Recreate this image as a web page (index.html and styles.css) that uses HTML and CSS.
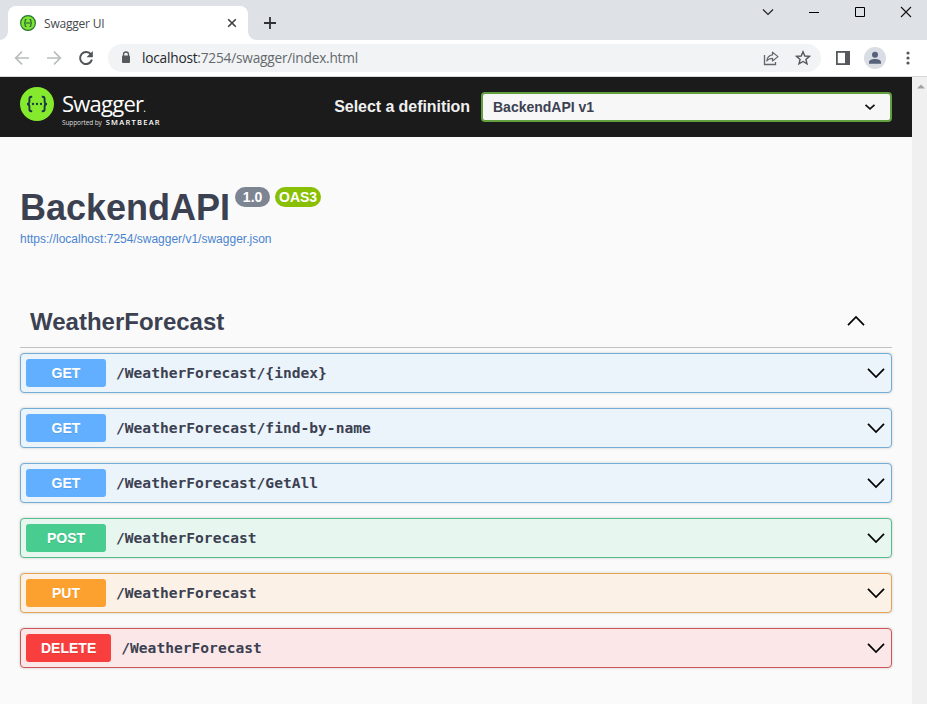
FILE: index.html
```html
<!DOCTYPE html>
<html lang="en">
<head>
<meta charset="utf-8">
<title>Swagger UI</title>
<link rel="stylesheet" href="styles.css">
</head>
<body>
<header class="tabs">
  <div class="tab">
    <svg class="favicon" width="16" height="16" viewBox="0 0 16 16"><circle cx="8" cy="8" r="7.4" fill="#7fe234" stroke="#26762f" stroke-width="1.2"/><path d="M6.500 4.500H6q-.9 0-.9.9v1.500q0 1.100-1 1.100 1 0 1 1.100v1.500q0 .9.9.9h.5M9.500 4.500h.5q.9 0 .9.9v1.500q0 1.100 1 1.100-1 0-1 1.100v1.500q0 .9-.9.9h-.5M6 8h4" fill="none" stroke="#1d5a3a" stroke-width="1.1"/></svg>
    <span class="tab-title">Swagger UI</span>
    <svg class="tab-close" width="10" height="10" viewBox="0 0 10 10"><path d="M1.200 1.200l7.600 7.600M8.800 1.200L1.200 8.800" stroke="#3c4043" stroke-width="1.6"/></svg>
  </div>
  <svg class="new-tab" width="12" height="12" viewBox="0 0 12 12"><path d="M6 0v12M0 6h12" stroke="#303236" stroke-width="1.8"/></svg>
  <div class="window-buttons">
    <svg width="46" height="24" viewBox="0 0 46 24"><path d="M18 9.500l5 5 5-5" fill="none" stroke="#222" stroke-width="1.2"/></svg>
    <svg width="46" height="24" viewBox="0 0 46 24"><path d="M18 12.500h10" stroke="#000"/></svg>
    <svg width="46" height="24" viewBox="0 0 46 24"><path d="M18.500 7.500h9v9h-9z" fill="none" stroke="#000"/></svg>
    <svg width="46" height="24" viewBox="0 0 46 24"><path d="M18 7l10 10M28 7L18 17" stroke="#111" stroke-width="1.1"/></svg>
  </div>
</header>
<nav class="toolbar">
  <svg class="nav-icon" width="16" height="16" viewBox="0 0 16 16"><path d="M15 8H2M8 1.700L1.700 8 8 14.300" fill="none" stroke="#babcbe" stroke-width="1.7"/></svg>
  <svg class="nav-icon" width="16" height="16" viewBox="0 0 16 16"><path d="M1 8h13M8 1.700L14.300 8 8 14.300" fill="none" stroke="#babcbe" stroke-width="1.7"/></svg>
  <svg class="nav-icon" width="16" height="16" viewBox="0 0 16 16"><path d="M13 4.600A6 6 0 1 0 13.900 9.500" fill="none" stroke="#505357" stroke-width="2"/><path d="M14.800 1v6.300H8.500z" fill="#505357"/></svg>
  <div class="address">
    <svg class="lock" width="10" height="13" viewBox="0 0 10 13"><path d="M2.500 5V3.500a2.500 2.500 0 0 1 5 0V5" fill="none" stroke="#55585c" stroke-width="1.3"/><rect x="1" y="4.500" width="8" height="7.500" rx="1" fill="#55585c"/></svg>
    <span class="url"><b>localhost</b>:7254/swagger/index.html</span>
    <svg class="share" width="16" height="16" viewBox="0 0 16 16"><path d="M1.500 5v9.500h11V12" fill="none" stroke="#63666b" stroke-width="1.3"/><path d="M9.500 2.200v2.600C5.800 5.200 4.100 7.800 3.800 11c1.400-1.900 3.100-2.700 5.700-2.700V11L15 6.600z" fill="none" stroke="#63666b" stroke-width="1.2" stroke-linejoin="round"/></svg>
    <svg class="star" width="16" height="16" viewBox="0 0 16 16"><path d="M8 1.800l1.800 4.200 4.600.4-3.500 3 1.100 4.500L8 11.500l-4 2.400 1.100-4.500-3.500-3 4.600-.4z" fill="none" stroke="#55585c" stroke-width="1.4"/></svg>
  </div>
  <svg class="panel" width="14" height="14" viewBox="0 0 14 14"><rect x=".9" y=".9" width="12.200" height="12.200" fill="none" stroke="#55585c" stroke-width="1.8"/><path d="M9 1h4.500v12H9z" fill="#55585c"/></svg>
  <svg class="avatar" width="22" height="22" viewBox="0 0 22 22"><circle cx="11" cy="11" r="11" fill="#dadde4"/><circle cx="11" cy="7.800" r="3" fill="#56617a"/><path d="M5 16.800v-1.500c0-2 3-3.200 6-3.200s6 1.200 6 3.200v1.500z" fill="#56617a"/></svg>
  <svg class="menu" width="4" height="14" viewBox="0 0 4 14"><g fill="#55585c"><circle cx="2" cy="2" r="1.600"/><circle cx="2" cy="7" r="1.600"/><circle cx="2" cy="12" r="1.600"/></g></svg>
</nav>
<div class="viewport">
  <main class="page">
    <div class="topbar">
      <svg class="logo" width="34" height="34" viewBox="0 0 34 34"><circle cx="17" cy="17" r="17" fill="#85ea2d"/><g fill="none" stroke="#173647" stroke-width="1.9"><path d="M12.200 9.800h-.8q-2 0-2 2v2.700q0 2.500-2.400 2.500 2.400 0 2.400 2.500v2.700q0 2 2 2h.8M21.800 9.800h.8q2 0 2 2v2.700q0 2.500 2.400 2.500-2.400 0-2.400 2.500v2.700q0 2-2 2h-.8"/></g><g fill="#173647"><circle cx="13" cy="17" r="1.150"/><circle cx="17" cy="17" r="1.150"/><circle cx="21" cy="17" r="1.150"/></g></svg>
      <div class="brand">
        <div class="brand-name">Swagger<span class="mark">.</span></div>
        <div class="brand-sub"><span>Supported by</span><b>SMARTBEAR</b></div>
      </div>
      <span class="select-label">Select a definition</span>
      <div class="select"><span>BackendAPI v1</span><svg width="12" height="8" viewBox="0 0 12 8"><path d="M1.500 1.800L6 5.800l4.500-4" fill="none" stroke="#111" stroke-width="1.700"/></svg></div>
    </div>
    <section class="info">
      <div class="title-row"><h1>BackendAPI</h1><span class="badge version">1.0</span><span class="badge oas">OAS3</span></div>
      <a class="spec-link">https://localhost:7254/swagger/v1/swagger.json</a>
    </section>
    <section class="operations">
      <div class="tag"><h2>WeatherForecast</h2><svg width="20" height="12" viewBox="0 0 20 12"><path d="M2 10.200L10 2l8 8.200" fill="none" stroke="#000" stroke-width="1.7"/></svg></div>
      <div class="op get"><span class="method">GET</span><span class="path">/WeatherForecast/{index}</span><svg width="20" height="12" viewBox="0 0 20 12"><path d="M2 1.800L10 10l8-8.200" /></svg></div>
      <div class="op get"><span class="method">GET</span><span class="path">/WeatherForecast/find-by-name</span><svg width="20" height="12" viewBox="0 0 20 12"><path d="M2 1.800L10 10l8-8.200" /></svg></div>
      <div class="op get"><span class="method">GET</span><span class="path">/WeatherForecast/GetAll</span><svg width="20" height="12" viewBox="0 0 20 12"><path d="M2 1.800L10 10l8-8.200" /></svg></div>
      <div class="op post"><span class="method">POST</span><span class="path">/WeatherForecast</span><svg width="20" height="12" viewBox="0 0 20 12"><path d="M2 1.800L10 10l8-8.200" /></svg></div>
      <div class="op put"><span class="method">PUT</span><span class="path">/WeatherForecast</span><svg width="20" height="12" viewBox="0 0 20 12"><path d="M2 1.800L10 10l8-8.200" /></svg></div>
      <div class="op delete"><span class="method">DELETE</span><span class="path">/WeatherForecast</span><svg width="20" height="12" viewBox="0 0 20 12"><path d="M2 1.800L10 10l8-8.200" /></svg></div>
    </section>
  </main>
  <aside class="scrollbar"><svg width="8" height="5" viewBox="0 0 8 5"><path d="M0 4.500L4 .5l4 4z" fill="#a3a3a3"/></svg></aside>
</div>
</body>
</html>
```
FILE: styles.css
```css
* { box-sizing: border-box; }
body {
  margin: 0;
  width: 927px;
  height: 704px;
  overflow: hidden;
  display: flex;
  flex-direction: column;
  font-family: "Liberation Sans", Arial, sans-serif;
  color: #3b4151;
}
svg { display: block; flex: none; }
h1, h2 { margin: 0; font-weight: bold; white-space: nowrap; }

.tabs {
  height: 40px;
  flex: none;
  display: flex;
  background: #dee1e6;
  padding-left: 8px;
}
.tab {
  position: relative;
  width: 240px;
  height: 34px;
  margin-top: 6px;
  padding: 0 11px 0 12px;
  display: flex;
  align-items: center;
  background: #fff;
  border-radius: 8px 8px 0 0;
}
.tab::before, .tab::after {
  content: "";
  position: absolute;
  bottom: 0;
  width: 8px;
  height: 8px;
}
.tab::before { left: -8px; background: radial-gradient(circle at 0 0, transparent 7.500px, #fff 8px); }
.tab::after { right: -8px; background: radial-gradient(circle at 100% 0, transparent 7.500px, #fff 8px); }
.tab-title {
  flex: 1;
  margin-left: 8px;
  font: 12px "Open Sans", "Noto Sans", sans-serif;
  letter-spacing: -0.200px;
  color: #45494d;
}
.new-tab { margin: 17px 0 0 16px; }
.window-buttons { display: flex; margin-left: auto; margin-right: -2px; }

.toolbar {
  height: 37px;
  flex: none;
  display: flex;
  align-items: center;
  padding: 0 17px 1px 14px;
  background: #fff;
  border-bottom: 1px solid #d5dad9;
}
.nav-icon { margin-right: 16px; }
.nav-icon:nth-of-type(3) { margin-right: 14px; }
.address {
  width: 713px;
  height: 28px;
  display: flex;
  align-items: center;
  padding: 0 10px 0 13px;
  background: #f1f3f4;
  border-radius: 14px;
}
.url {
  flex: 1;
  margin-left: 11px;
  font: 13.700px "Open Sans", "Noto Sans", sans-serif;
  letter-spacing: -0.220px;
  color: #65696e;
}
.url b { font-weight: normal; color: #25272b; }
.share { margin-right: 16px; }
.panel { margin-left: 15px; }
.avatar { margin-left: 14px; }
.menu { margin-left: auto; }

.viewport { flex: 1; display: flex; min-height: 0; }
.page { width: 912px; background: #fafafa; }
.scrollbar { flex: 1; background: #f0f0f0; padding: 7px 0 0 5px; }

.topbar {
  height: 60px;
  display: flex;
  align-items: center;
  padding: 0 20px;
  background: #1b1b1b;
}
.logo { margin-top: -6px; }
.brand { width: 106px; margin-left: 8px; color: #fff; align-self: flex-start; }
.brand-name {
  height: 27px;
  margin-top: 13px;
  font: 22px/27px "Open Sans", sans-serif;
  letter-spacing: -0.750px;
  white-space: nowrap;
}
.mark { font-size: 10px; }
.brand-sub {
  display: flex;
  gap: 4px;
  margin-top: 1px;
  font: 6.500px/9px "Open Sans", sans-serif;
  white-space: nowrap;
  color: #ddd;
}
.brand-sub b { font-size: 7.500px; font-weight: 600; letter-spacing: 1.250px; color: #fff; }
.brand-sub span { letter-spacing: -0.100px; }
.select-label {
  margin-left: auto;
  margin-right: 11px;
  font-size: 16px;
  font-weight: bold;
  letter-spacing: -0.060px;
  color: #f0f0f0;
  white-space: nowrap;
}
.select {
  width: 411px;
  height: 30px;
  display: flex;
  align-items: center;
  justify-content: space-between;
  padding: 0 14px 0 10px;
  border: 2px solid #62a03f;
  border-radius: 4px;
  background: #f7f7f7;
  font-size: 14px;
  font-weight: bold;
}

.info { padding: 48px 20px 0; height: 160px; }
.title-row { display: flex; align-items: flex-start; }
.title-row h1 { font-size: 36px; line-height: 46px; }
.badge {
  height: 20px;
  margin-top: 2px;
  border-radius: 10px;
  color: #fff;
  font-size: 14px;
  font-weight: bold;
  line-height: 20px;
  text-align: center;
}
.version { width: 35px; margin-left: 5px; background: #7d8492; }
.oas { width: 46px; margin-left: 5px; background: #89bf04; }
.spec-link { display: block; font-size: 12px; line-height: 14px; margin-top: 1px; color: #4a84d0; }

.operations { padding: 0 20px; }
.tag {
  height: 51px;
  display: flex;
  align-items: center;
  justify-content: space-between;
  padding: 0 26px 2px 10px;
  margin-bottom: 5px;
  border-bottom: 1px solid #bfc1c5;
}
.tag h2 { font-size: 24px; padding-top: 2px; }
.op {
  height: 40px;
  display: flex;
  align-items: center;
  margin-bottom: 15px;
  padding: 0 5px;
  border: 1px solid var(--line);
  border-radius: 4px;
  background: var(--tint);
  box-shadow: 0 0 3px rgba(0, 0, 0, 0.190);
}
.op svg { margin-left: auto; fill: none; stroke: #000; stroke-width: 1.7; }
.method {
  min-width: 80px;
  padding: 0 15px;
  height: 28px;
  border-radius: 3px;
  background: var(--fill);
  color: #fff;
  font-size: 14px;
  font-weight: bold;
  line-height: 28px;
  text-align: center;
  text-shadow: 0 1px 0 rgba(0, 0, 0, 0.100);
}
.path {
  margin-left: 10px;
  padding-bottom: 2px;
  font: bold 14.600px "DejaVu Sans Mono", monospace;
}
.get { --fill: #61affe; --line: #72add8; --tint: #ebf3fb; }
.post { --fill: #49cc90; --line: #58bd8c; --tint: #e8f6f0; }
.put { --fill: #fca130; --line: #e3a455; --tint: #fbf1e6; }
.delete { --fill: #f93e3e; --line: #ce5558; --tint: #fbe7e8; }
```
